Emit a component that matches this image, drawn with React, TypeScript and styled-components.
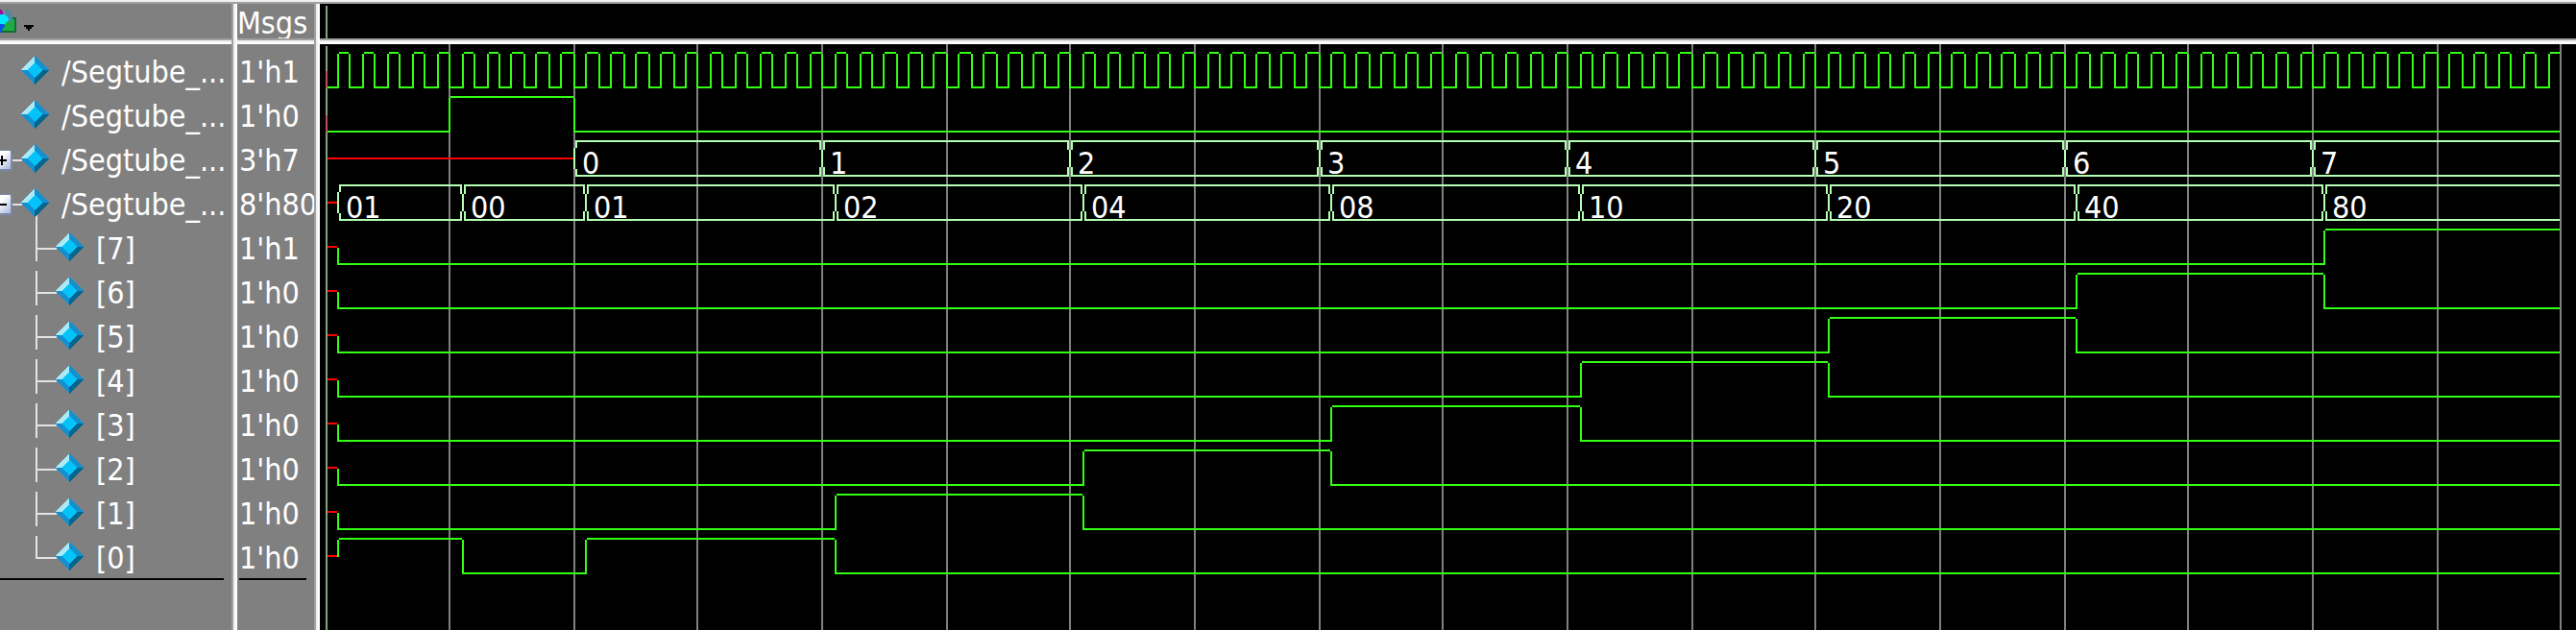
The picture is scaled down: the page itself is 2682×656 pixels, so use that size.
import React from 'react';
import styled, { createGlobalStyle } from 'styled-components';

const GlobalStyle = createGlobalStyle`
  * { box-sizing: border-box; }
  body {
    margin: 0;
    background: #808080;
    color: #fff;
    font-family: 'DejaVu Sans Condensed', 'DejaVu Sans', Tahoma, sans-serif;
    font-size: 32px;
  }
`;

const ROW = 46;

const Window = styled.main`
  display: flex;
  min-height: 100vh;
  border-top: 2px solid #f0f0f0;
  box-shadow: inset 0 2px 0 #a0a0a0;
  padding-top: 2px;
  overflow: hidden;
`;

const Pane = styled.section<{ $width?: number; $dark?: boolean }>`
  display: flex;
  flex-direction: column;
  min-width: 0;
  flex: ${(p) => (p.$width ? `0 0 ${p.$width}px` : '1 1 0')};
  background: ${(p) => (p.$dark ? '#000' : '#808080')};
  overflow: hidden;
`;

const Splitter = styled.div`
  flex: 0 0 6px;
  background: linear-gradient(to right, #a0a0a0 2px, #f0f0f0 2px 4px, #fff 4px);
`;

const PaneHeader = styled.header`
  flex: 0 0 36px;
  display: flex;
  overflow: hidden;
`;

const HeaderRule = styled.div`
  flex: 0 0 6px;
  background: linear-gradient(#a0a0a0 2px, #f0f0f0 2px 4px, #fff 4px);
`;

const HeaderTitle = styled.h2`
  margin: 0;
  font-size: 32px;
  font-weight: 400;
  line-height: 40px;
`;

const PlainButton = styled.button`
  display: block;
  padding: 0;
  border: 0;
  background: none;
  cursor: pointer;
`;

const SignalList = styled.ul`
  list-style: none;
  margin: 4px 8px 0 0;
  padding: 0;
  border-bottom: 2px solid #000;
`;

const ValueList = styled(SignalList)`
  margin: 4px 8px 0 2px;
`;

const Row = styled.li`
  display: flex;
  height: ${ROW}px;
`;

const Label = styled.span`
  padding-top: 4px;
  line-height: 42px;
  white-space: nowrap;
`;

const NameLabel = styled(Label)`
  padding-left: 2px;
`;

const Expander = styled(PlainButton)`
  flex: 0 0 13px;
  height: ${ROW}px;
`;

const Marker = styled.svg`
  flex: none;
  display: block;
`;

const Spacer = styled.span`
  flex: 0 0 13px;
`;

const WaveArea = styled.svg`
  flex: 1 1 auto;
  display: block;
  width: 100%;
  min-height: 600px;
`;

const HeaderWave = styled.svg`
  display: block;
  width: 100%;
  height: 36px;
`;

type Kind = 'leaf' | 'closed' | 'open' | 'first' | 'child' | 'last';

interface Signal {
  name: string;
  value: string;
  kind: Kind;
}

const SIGNALS: Signal[] = [
  { name: '/Segtube_...', value: "1'h1", kind: 'leaf' },
  { name: '/Segtube_...', value: "1'h0", kind: 'leaf' },
  { name: '/Segtube_...', value: "3'h7", kind: 'closed' },
  { name: '/Segtube_...', value: "8'h80", kind: 'open' },
  { name: '[7]', value: "1'h1", kind: 'first' },
  { name: '[6]', value: "1'h0", kind: 'child' },
  { name: '[5]', value: "1'h0", kind: 'child' },
  { name: '[4]', value: "1'h0", kind: 'child' },
  { name: '[3]', value: "1'h0", kind: 'child' },
  { name: '[2]', value: "1'h0", kind: 'child' },
  { name: '[1]', value: "1'h0", kind: 'child' },
  { name: '[0]', value: "1'h0", kind: 'last' },
];

const Gem = ({ x }: { x: number }) => (
  <g transform={`translate(${x} 23)`} shapeRendering="crispEdges">
    <path d="M0 -15 L15 0 L0 15 L-15 0Z" fill="#1490cf" />
    <path d="M0 -15 L0 0 L-15 0Z" fill="#a8eaf8" />
    <path d="M15 0 L0 15 L0 0Z" fill="#04658f" />
    <path d="M0 -8 L8 0 L0 8 L-8 0Z" fill="#04c3f8" />
  </g>
);

/* Tree lines and gem icon; the drawing begins 13px from the pane's edge. */
const TreeMarker = ({ kind }: { kind: Kind }) => {
  const nested = kind === 'first' || kind === 'child' || kind === 'last';
  const top = kind === 'first' ? 0 : 2;
  const bottom = kind === 'last' ? 26 : 38;
  return (
    <Marker width={nested ? 85 : 49} height={ROW} aria-hidden="true">
      <g fill="#e3e3e3">
        {nested && <rect x={24} y={top} width={2} height={bottom - top} />}
        {nested && <rect x={24} y={24} width={22} height={2} />}
        {kind === 'open' && <rect x={24} y={34} width={2} height={12} />}
        {(kind === 'open' || kind === 'closed') && <rect x={0} y={24} width={10} height={2} />}
      </g>
      <Gem x={nested ? 59 : 23} />
    </Marker>
  );
};

const ExpandButton = ({ open }: { open: boolean }) => (
  <Expander type="button" aria-expanded={open} aria-label={open ? 'Collapse signal' : 'Expand signal'}>
    <svg width={13} height={ROW} display="block">
      <defs>
        <linearGradient id="boxFace" x1="0" y1="0" x2="1" y2="1">
          <stop offset="0.4" stopColor="#fff" />
          <stop offset="1" stopColor="#a9b8dc" />
        </linearGradient>
      </defs>
      <rect x={-9} y={14} width={22} height={22} rx={2} fill="#7a88a8" />
      <rect x={-9} y={15} width={20} height={19} rx={1} fill="url(#boxFace)" />
      <rect x={-4} y={24} width={11} height={2} fill="#000" />
      {!open && <rect x={1} y={20} width={2} height={10} fill="#000" />}
    </svg>
  </Expander>
);

const ObjectsIcon = () => (
  <svg width={38} height={36} display="block" shapeRendering="crispEdges">
    <path d="M0 6 h2 v2 h1 v4 h-3z" fill="#a000a0" />
    <rect x={0} y={14} width={17} height={16} fill="#166a35" />
    <rect x={0} y={16} width={15} height={12} fill="#1bad3f" />
    <path d="M5 6 h4 v2 h2 v2 h2 v7 h-2 v2 h-6z" fill="#4c8aa4" />
    <path d="M0 15 L5 23 L0 31Z" fill="#0a52e6" />
    <path d="M0 11 h6 v2 h2 v2 h1 v2 h-1 v2 h-2 v2 h-6z" fill="#00e8ff" />
    <path d="M25 22 h10 v2 h-2 v2 h-2 v2 h-2 v-2 h-2 v-2 h-2z" fill="#000" />
  </svg>
);

/* ---- waveforms ---- */

const GREEN = '#33ff14';
const BUS = '#b4ffb4';
const RED = '#ff0000';
const GRID = '#808080';
const CURSOR = '#82a282';

const ORIGIN = 7;
const DIVISION = 129.31;
const DIVISIONS = 18;
const HALF_CLOCK = DIVISION / 10;

/* Traces are plotted on a two pixel raster. */
const at = (distance: number) => ORIGIN + 2 * Math.floor(distance / 2);
const division = (n: number) => at(n * DIVISION);
const clocked = (n: number) => at(n * DIVISION + HALF_CLOCK);
const END = division(DIVISIONS);
const highY = (row: number) => 9 + row * ROW;

type Level = 0 | 1;
type Step = [number, Level];

const Trace = ({ row, steps }: { row: number; steps: Step[] }) => {
  const y = highY(row);
  let d = '';
  steps.forEach(([x, level], i) => {
    const last = i + 1 === steps.length;
    const highEnd = last ? END - 1 : steps[i + 1][0] - 1;
    const lowEnd = last ? END - 1 : steps[i + 1][0] + 1;
    d += level ? `M${x + 1} ${y}H${highEnd}` : `M${x - 1} ${y + 36}H${lowEnd}`;
    if (i > 0) d += `M${x} ${y + 1}V${y + 37}`;
  });
  return <path d={d} stroke={GREEN} />;
};

const clockSteps: Step[] = Array.from({ length: DIVISIONS * 10 }, (_, k) => [
  at(k * HALF_CLOCK),
  (k % 2) as Level,
]);
clockSteps[0] = [ORIGIN + 2, 0];

/* A bit that is unknown until the first clock edge. */
const BitTrace = ({ row, steps }: { row: number; steps: Step[] }) => {
  const y = highY(row);
  const x = steps[0][0];
  const rising = steps[0][1] === 1;
  return (
    <g>
      <path d={`M${ORIGIN + 1} ${y + 18}H${x - 1}`} stroke={RED} />
      <path d={rising ? `M${x} ${y + 1}V${y + 19}` : `M${x} ${y + 19}V${y + 37}`} stroke={GREEN} />
      <Trace row={row} steps={steps} />
    </g>
  );
};

const BusTrace = ({ row, edges, labels }: { row: number; edges: number[]; labels: string[] }) => {
  const y = highY(row);
  let d = '';
  edges.forEach((x, i) => {
    const last = i + 1 === edges.length;
    const right = last ? END - 1 : edges[i + 1] - 1;
    const tick = i === 0 ? 7 : 9;
    d += `M${x + 1} ${y}H${right}M${x + 1} ${y + 36}H${right}`;
    d += `M${x + 2} ${y}V${y + tick}M${x + 2} ${y + 36}V${y + 36 - tick}`;
    d += `M${x} ${y + tick}V${y + 36 - tick}`;
    if (i > 0) d += `M${x - 2} ${y}V${y + tick}M${x - 2} ${y + 36}V${y + 36 - tick}`;
  });
  return (
    <g>
      <path d={`M${ORIGIN + 1} ${y + 18}H${edges[0] - 1}`} stroke={RED} />
      <path d={d} stroke={BUS} />
      {labels.map((label, i) => (
        <text key={i} x={edges[i] + 8} y={y + 34} fill="#fff" stroke="none">
          {label}
        </text>
      ))}
    </g>
  );
};

const countEdges = [2, 4, 6, 8, 10, 12, 14, 16].map(division);
const selectEdges = [0, 1, 2, 4, 6, 8, 10, 12, 14, 16].map(clocked);

const bitSteps = (bit: number): Step[] => {
  if (bit === 0) {
    return [
      [clocked(0), 1],
      [clocked(1), 0],
      [clocked(2), 1],
      [clocked(4), 0],
    ];
  }
  const steps: Step[] = [
    [clocked(0), 0],
    [clocked(2 + bit * 2), 1],
  ];
  if (bit < 7) steps.push([clocked(4 + bit * 2), 0]);
  return steps;
};

const Waves = () => (
  <WaveArea role="img" aria-label="Signal waveforms" strokeWidth={2} fill="none" shapeRendering="crispEdges">
    {Array.from({ length: DIVISIONS }, (_, i) => (
      <line key={i} x1={division(i + 1)} x2={division(i + 1)} y1={0} y2="100%" stroke={GRID} />
    ))}
    <line x1={ORIGIN} x2={ORIGIN} y1={2} y2="100%" stroke={CURSOR} />
    <path d={`M${ORIGIN} 28V46M${ORIGIN} 74V92`} stroke="#b85064" />
    <Trace row={0} steps={clockSteps} />
    <Trace
      row={1}
      steps={[
        [ORIGIN + 2, 0],
        [division(1), 1],
        [division(2), 0],
      ]}
    />
    <BusTrace row={2} edges={countEdges} labels={['0', '1', '2', '3', '4', '5', '6', '7']} />
    <BusTrace
      row={3}
      edges={selectEdges}
      labels={['01', '00', '01', '02', '04', '08', '10', '20', '40', '80']}
    />
    {[7, 6, 5, 4, 3, 2, 1, 0].map((bit, i) => (
      <BitTrace key={bit} row={4 + i} steps={bitSteps(bit)} />
    ))}
  </WaveArea>
);

export default function App() {
  return (
    <>
      <GlobalStyle />
      <Window>
        <Pane $width={241} aria-label="Signals">
          <PaneHeader>
            <PlainButton type="button" aria-label="Object filter">
              <ObjectsIcon />
            </PlainButton>
          </PaneHeader>
          <HeaderRule />
          <SignalList>
            {SIGNALS.map((s, i) => (
              <Row key={i}>
                {s.kind === 'open' || s.kind === 'closed' ? <ExpandButton open={s.kind === 'open'} /> : <Spacer />}
                <TreeMarker kind={s.kind} />
                <NameLabel>{s.name}</NameLabel>
              </Row>
            ))}
          </SignalList>
        </Pane>
        <Splitter />
        <Pane $width={80} aria-label="Values">
          <PaneHeader>
            <HeaderTitle>Msgs</HeaderTitle>
          </PaneHeader>
          <HeaderRule />
          <ValueList>
            {SIGNALS.map((s, i) => (
              <Row key={i}>
                <Label>{s.value}</Label>
              </Row>
            ))}
          </ValueList>
        </Pane>
        <Splitter />
        <Pane $dark aria-label="Waveforms">
          <PaneHeader>
            <HeaderWave aria-hidden="true">
              <rect x={ORIGIN - 1} y={2} width={2} height={34} fill={CURSOR} />
            </HeaderWave>
          </PaneHeader>
          <HeaderRule />
          <Waves />
        </Pane>
      </Window>
    </>
  );
}
